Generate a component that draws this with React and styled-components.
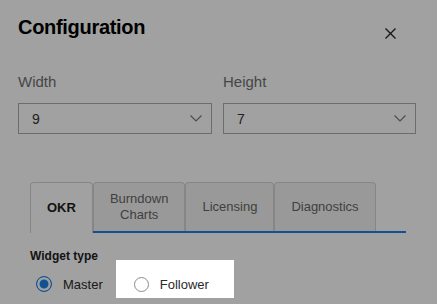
import React, { useState } from 'react';
import styled, { createGlobalStyle } from 'styled-components';

const GlobalStyle = createGlobalStyle`
    html, body {
        margin: 0;
        padding: 0;
        background: #fff;
        font-family: "Liberation Sans", Arial, Helvetica, sans-serif;
    }
    * { box-sizing: border-box; }
`;

const BLUE = '#1f80e4';

const Dialog = styled.div`
    position: relative;
    width: 437px;
    height: 304px;
    overflow: hidden;
    background: #fff;
    padding: 15px 21px 0 18px;
`;

const Header = styled.div`
    display: flex;
    justify-content: space-between;
    align-items: flex-start;
`;

const Title = styled.h2`
    margin: 0;
    font-size: 20px;
    line-height: 24px;
    font-weight: 700;
    letter-spacing: -0.3px;
    color: #000;
`;

const CloseButton = styled.button`
    width: 24px;
    height: 24px;
    margin: 6px 14px 0 0;
    padding: 0;
    border: none;
    background: none;
    display: flex;
    align-items: center;
    justify-content: center;
    cursor: pointer;
`;

const Fields = styled.div`
    display: grid;
    grid-template-columns: 194px 193px;
    column-gap: 11px;
    margin-top: 28px;
`;

const Field = styled.div`
    display: flex;
    flex-direction: column;
`;

const Label = styled.label`
    font-size: 15px;
    line-height: 18px;
    color: #707070;
`;

const SelectBox = styled.div`
    margin-top: 12px;
    height: 31px;
    border: 1px solid #ababab;
    display: flex;
    align-items: center;
    justify-content: space-between;
    padding: 0 9px 0 13px;
    font-size: 14px;
    color: #333;
`;

const TabList = styled.div`
    display: flex;
    align-items: stretch;
    margin: 48px 10px 0 12px;
    height: 51px;
    border-bottom: 2px solid ${BLUE};
`;

const Tab = styled.button`
    flex: none;
    display: flex;
    align-items: center;
    justify-content: center;
    text-align: center;
    padding: 8px 16px;
    margin-bottom: ${p => (p.$active ? '-2px' : '0')};
    border: 1px solid #d4d4d4;
    border-bottom: none;
    border-radius: 4px 4px 0 0;
    background: ${p => (p.$active ? '#fff' : '#f3f3f3')};
    color: ${p => (p.$active ? '#1c1c1c' : '#666')};
    font-family: inherit;
    font-size: 13px;
    line-height: 16px;
    font-weight: ${p => (p.$active ? 700 : 400)};
    cursor: pointer;
`;

const Section = styled.div`
    margin: 16px 0 0 12px;
`;

const SectionTitle = styled.div`
    font-size: 12px;
    line-height: 15px;
    font-weight: 700;
    color: #222;
`;

const RadioRow = styled.div`
    display: flex;
    align-items: center;
    margin: 10px 0 0 6px;
    height: 20px;
`;

const RadioItem = styled.label`
    position: relative;
    display: flex;
    align-items: center;
    gap: 11px;
    font-size: 13px;
    color: #2a2a2a;
    margin-left: ${p => p.$offset || 0}px;
    cursor: pointer;
`;

const Circle = styled.span`
    width: ${p => (p.$checked ? 16 : 15)}px;
    height: ${p => (p.$checked ? 16 : 15)}px;
    border-radius: 50%;
    border: ${p => (p.$checked ? `1.5px solid ${BLUE}` : '1px solid #8c8c8c')};
    background: ${p => (p.$checked ? BLUE : '#fff')};
    box-shadow: ${p => (p.$checked ? 'inset 0 0 0 2.5px #fff' : 'none')};
`;

// tour spotlight: transparent hole, the spread shadow dims the rest of the page
const Spotlight = styled.span`
    position: absolute;
    top: -17px;
    left: -18px;
    right: -25px;
    bottom: -6px;
    z-index: 10;
    pointer-events: none;
    box-shadow: 0 0 0 2000px rgba(0, 0, 0, 0.37);
`;

const Chevron = () => (
    <svg width="12" height="7" viewBox="0 0 12 7">
        <polyline points="0.5,0.5 6,6 11.5,0.5" fill="none" stroke="#7a7a7a" strokeWidth="1.2" />
    </svg>
);

const tabs = ['OKR', 'Burndown Charts', 'Licensing', 'Diagnostics'];

export default function App() {
    const [active, setActive] = useState(0);
    const [type, setType] = useState('master');

    return (
        <Dialog>
            <GlobalStyle />
            <Header>
                <Title>Configuration</Title>
                <CloseButton aria-label="Close">
                    <svg width="11" height="11" viewBox="0 0 11 11">
                        <path d="M0.5 0.5 L10.5 10.5 M10.5 0.5 L0.5 10.5" stroke="#222" strokeWidth="1.3" />
                    </svg>
                </CloseButton>
            </Header>
            <Fields>
                <Field>
                    <Label>Width</Label>
                    <SelectBox>
                        <span>9</span>
                        <Chevron />
                    </SelectBox>
                </Field>
                <Field>
                    <Label>Height</Label>
                    <SelectBox>
                        <span>7</span>
                        <Chevron />
                    </SelectBox>
                </Field>
            </Fields>
            <TabList>
                {tabs.map((t, i) => (
                    <Tab key={t} $active={i === active} onClick={() => setActive(i)}>
                        {t === 'Burndown Charts' ? (
                            <span>
                                Burndown
                                <br />
                                Charts
                            </span>
                        ) : (
                            t
                        )}
                    </Tab>
                ))}
            </TabList>
            <Section>
                <SectionTitle>Widget type</SectionTitle>
                <RadioRow>
                    <RadioItem onClick={() => setType('master')}>
                        <Circle $checked={type === 'master'} />
                        Master
                    </RadioItem>
                    <RadioItem $offset={31} onClick={() => setType('follower')}>
                        <Circle $checked={type === 'follower'} />
                        Follower
                        <Spotlight />
                    </RadioItem>
                </RadioRow>
            </Section>
        </Dialog>
    );
}
